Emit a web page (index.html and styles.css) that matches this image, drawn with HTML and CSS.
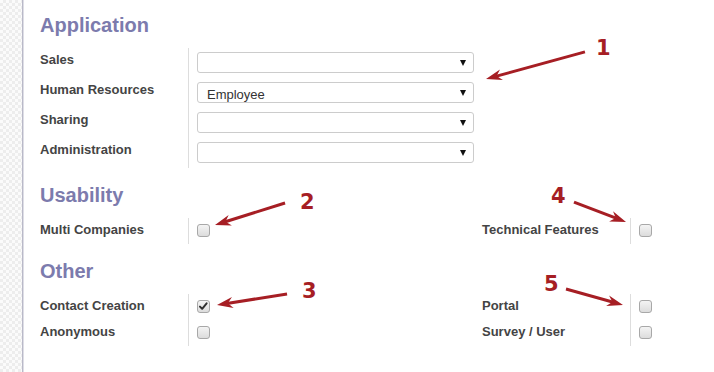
FILE: index.html
```html
<!DOCTYPE html>
<html>
<head>
<meta charset="utf-8">
<link rel="stylesheet" href="styles.css">
</head>
<body>
<div class="page">
  <div class="rail"></div>
  <div class="content">
    <h2 class="section">Application</h2>
    <div class="group group-app">
      <div class="label">Sales</div>
      <div class="field"><div class="select"><span class="val"></span><span class="caret"></span></div></div>
      <div class="label">Human Resources</div>
      <div class="field"><div class="select"><span class="val">Employee</span><span class="caret"></span></div></div>
      <div class="label">Sharing</div>
      <div class="field"><div class="select"><span class="val"></span><span class="caret"></span></div></div>
      <div class="label">Administration</div>
      <div class="field"><div class="select"><span class="val"></span><span class="caret"></span></div></div>
    </div>

    <h2 class="section">Usability</h2>
    <div class="group group-cb">
      <div class="label">Multi Companies</div>
      <div class="field cbf"><span class="cb"></span></div>
      <div class="label">Technical Features</div>
      <div class="field cbf"><span class="cb"></span></div>
    </div>

    <h2 class="section">Other</h2>
    <div class="group group-cb">
      <div class="label">Contact Creation</div>
      <div class="field cbf"><span class="cb checked"><svg viewBox="0 0 13 13" width="11" height="11"><path d="M2.3 6.6 L4.9 9.2 L10.2 2.8" fill="none" stroke="#2e2e2e" stroke-width="2.3" stroke-linecap="round" stroke-linejoin="round"/></svg></span></div>
      <div class="label">Portal</div>
      <div class="field cbf"><span class="cb"></span></div>
      <div class="label">Anonymous</div>
      <div class="field cbf"><span class="cb"></span></div>
      <div class="label">Survey / User</div>
      <div class="field cbf"><span class="cb"></span></div>
    </div>
  </div>

  <svg class="notes" width="714" height="372" viewBox="0 0 714 372">
    <g fill="#a61e24" stroke="#a61e24">
      <g transform="translate(486 79) rotate(164.7)">
        <line x1="-102.6" y1="0" x2="-10" y2="0" stroke-width="3"/>
        <polygon points="0,0 -16,-5.5 -11,0 -16,5.5" stroke="none"/>
      </g>
      <g transform="translate(215 225) rotate(162.6)">
        <line x1="-73.4" y1="0" x2="-10" y2="0" stroke-width="3"/>
        <polygon points="0,0 -16,-5.5 -11,0 -16,5.5" stroke="none"/>
      </g>
      <g transform="translate(217 305) rotate(171.1)">
        <line x1="-70.9" y1="0" x2="-10" y2="0" stroke-width="3"/>
        <polygon points="0,0 -16,-5.5 -11,0 -16,5.5" stroke="none"/>
      </g>
      <g transform="translate(626 222) rotate(21)">
        <line x1="-55.7" y1="0" x2="-10" y2="0" stroke-width="3"/>
        <polygon points="0,0 -16,-5.5 -11,0 -16,5.5" stroke="none"/>
      </g>
      <g transform="translate(623 305) rotate(15.7)">
        <line x1="-59.2" y1="0" x2="-10" y2="0" stroke-width="3"/>
        <polygon points="0,0 -16,-5.5 -11,0 -16,5.5" stroke="none"/>
      </g>
    </g>
    <g class="num" fill="#a61e24">
      <text x="596" y="55">1</text>
      <text x="300" y="209">2</text>
      <text x="302" y="298">3</text>
      <text x="551" y="203">4</text>
      <text x="544" y="291">5</text>
    </g>
  </svg>
</div>
</body>
</html>
```

FILE: styles.css
```css
html, body {
  margin: 0;
  padding: 0;
  background: #ffffff;
}

body {
  font-family: "Liberation Sans", Arial, sans-serif;
}

.page {
  position: relative;
  display: flex;
  width: 714px;
  height: 372px;
  overflow: hidden;
}

.rail {
  flex: none;
  width: 22px;
  background-color: #fbfbfb;
  background-image: conic-gradient(#ededed 25%, transparent 0 50%, #ededed 0 75%, transparent 0);
  background-size: 6px 6px;
  border-right: 1px solid #b9b9c8;
  box-shadow: 1px 0 0 #dedee6;
}

.content {
  flex: 1;
  padding: 13px 0 0 17px;
}

.section {
  margin: 0 0 11px;
  font-size: 20px;
  line-height: 24px;
  font-weight: bold;
  color: #7c7bad;
}

.group + .section {
  margin-top: 15px;
}

.group {
  display: grid;
}

.group-app {
  grid-template-columns: 148px auto;
  grid-auto-rows: 30px;
  justify-content: start;
}

.group-cb {
  grid-template-columns: 148px 294px 148px 1fr;
  grid-auto-rows: 26px;
}

.label {
  font-size: 13px;
  line-height: 16px;
  font-weight: bold;
  color: #444444;
  padding-top: 4px;
  white-space: nowrap;
}

.field {
  border-left: 1px solid #dddddd;
  padding: 4px 0 0 8px;
}

.cbf {
  padding-top: 6px;
}

.select {
  box-sizing: border-box;
  width: 277px;
  height: 21px;
  border: 1px solid #cccccc;
  border-radius: 3px;
  display: flex;
  align-items: center;
  justify-content: space-between;
  padding: 0 7px 0 9px;
  font-size: 13px;
  color: #333333;
  background: #ffffff;
}

.val {
  padding-top: 3px;
}

.caret {
  width: 0;
  height: 0;
  border-left: 3px solid transparent;
  border-right: 3px solid transparent;
  border-top: 6px solid #111111;
  margin-top: 1px;
}

.cb {
  display: flex;
  align-items: center;
  justify-content: center;
  box-sizing: border-box;
  width: 13px;
  height: 13px;
  border: 1px solid #a8a8a8;
  border-radius: 3px;
  background: linear-gradient(#f4f4f4, #dcdcdc);
}

.notes {
  position: absolute;
  left: 0;
  top: 0;
  pointer-events: none;
}

.num text {
  font-family: "DejaVu Sans", sans-serif;
  font-weight: bold;
  font-size: 21px;
}
```
